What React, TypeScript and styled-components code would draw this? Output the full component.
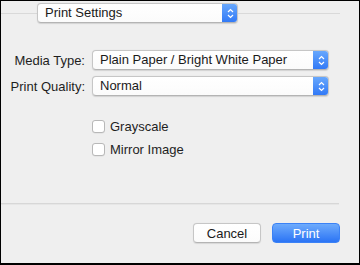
import React from "react";
import styled, { createGlobalStyle } from "styled-components";

const Global = createGlobalStyle`
  html, body { margin: 0; padding: 0; background: #000; }
  body { font-family: "Liberation Sans", Arial, sans-serif; }
`;

const Frame = styled.div`
  width: 360px;
  height: 265px;
  box-sizing: border-box;
  border: 1px solid #000;
  border-bottom-width: 2px;
  background: #efefef;
  display: flex;
  flex-direction: column;
  color: #1e1e1e;
  font-size: 13px;
`;

const Header = styled.div`
  display: flex;
  align-items: center;
  margin-top: 2px;
  padding-right: 19px;
`;

const Rule = styled.div<{ $w?: number }>`
  height: 1px;
  background: #d9d9d9;
  ${(p) => (p.$w ? `width: ${p.$w}px; flex: none;` : `flex: 1;`)}
`;

const Popup = styled.div<{ $w: number }>`
  width: ${(p) => p.$w}px;
  height: 20px;
  box-sizing: border-box;
  flex: none;
  display: flex;
  align-items: stretch;
  background: linear-gradient(#ffffff, #fbfbfb);
  border: 1px solid #c6c6c6;
  border-bottom-color: #b4b4b4;
  border-radius: 4px;
  box-shadow: 0 0.5px 1px rgba(0, 0, 0, 0.12);
  overflow: hidden;
`;

const PopupText = styled.span`
  flex: 1;
  padding-left: 7px;
  line-height: 18px;
  white-space: nowrap;
  color: #1a1a1a;
`;

const Stepper = styled.span`
  width: 16px;
  flex: none;
  display: flex;
  align-items: center;
  justify-content: center;
  background: linear-gradient(#6aaafd, #2f77f6);
  margin: -1px -1px -1px 0;
  border-radius: 0 4px 4px 0;
`;

const Form = styled.div`
  display: grid;
  grid-template-columns: 84px 237px;
  column-gap: 7px;
  row-gap: 6px;
  align-items: center;
  margin-top: 27px;
`;

const Label = styled.span`
  text-align: right;
  white-space: nowrap;
`;

const Checks = styled.div`
  display: flex;
  flex-direction: column;
  gap: 7px;
  margin-top: 22px;
  padding-left: 91px;
`;

const CheckRow = styled.label`
  display: flex;
  align-items: center;
  gap: 5px;
  height: 16px;
`;

const Box = styled.span`
  width: 13px;
  height: 13px;
  box-sizing: border-box;
  background: #fff;
  border: 1px solid #b8b8b8;
  border-radius: 3px;
  box-shadow: 0 0.5px 0.5px rgba(0, 0, 0, 0.08);
`;

const Separator = styled.div`
  margin-top: 46px;
  width: 338px;
  height: 1px;
  background: #d7d7d7;
  border-bottom: 1px solid #e6e6e6;
`;

const Footer = styled.div`
  display: flex;
  justify-content: flex-end;
  gap: 11px;
  padding-right: 19px;
  margin-top: 18px;
`;

const Button = styled.button<{ $primary?: boolean }>`
  width: 68px;
  height: 20px;
  box-sizing: border-box;
  padding: 0;
  font: inherit;
  font-size: 13px;
  border-radius: 4px;
  cursor: default;
  ${(p) =>
    p.$primary
      ? `
    color: #fff;
    border: 1px solid #3b82f6;
    background: linear-gradient(#6eabfc, #2b74f5);
  `
      : `
    color: #1a1a1a;
    border: 1px solid #c6c6c6;
    border-bottom-color: #b4b4b4;
    background: linear-gradient(#ffffff, #fbfbfb);
    box-shadow: 0 0.5px 1px rgba(0,0,0,0.1);
  `}
`;

const Chevrons = () => (
  <svg width="7" height="11" viewBox="0 0 7 11" fill="none">
    <path d="M1 4 L3.5 1.5 L6 4" stroke="#fff" strokeWidth="1.2" />
    <path d="M1 7 L3.5 9.5 L6 7" stroke="#fff" strokeWidth="1.2" />
  </svg>
);

const Select = ({ w, text }: { w: number; text: string }) => (
  <Popup $w={w}>
    <PopupText>{text}</PopupText>
    <Stepper>
      <Chevrons />
    </Stepper>
  </Popup>
);

export default function App() {
  return (
    <>
      <Global />
      <Frame>
        <Header>
          <Rule $w={36} />
          <Select w={201} text="Print Settings" />
          <Rule />
        </Header>
        <Form>
          <Label>Media Type:</Label>
          <Select w={237} text="Plain Paper / Bright White Paper" />
          <Label>Print Quality:</Label>
          <Select w={237} text="Normal" />
        </Form>
        <Checks>
          <CheckRow>
            <Box />
            Grayscale
          </CheckRow>
          <CheckRow>
            <Box />
            Mirror Image
          </CheckRow>
        </Checks>
        <Separator />
        <Footer>
          <Button>Cancel</Button>
          <Button $primary>Print</Button>
        </Footer>
      </Frame>
    </>
  );
}
